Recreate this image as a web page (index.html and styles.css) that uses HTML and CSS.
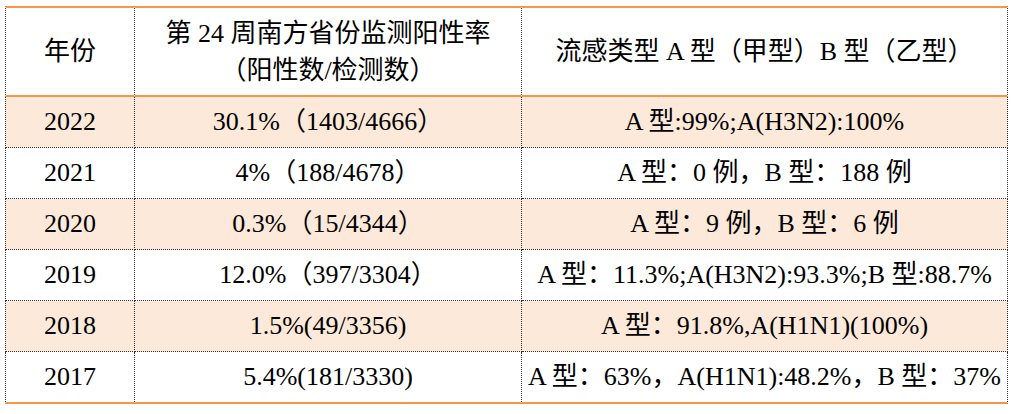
FILE: index.html
```html
<!DOCTYPE html>
<html lang="zh-CN">
<head>
<meta charset="utf-8">
<title>流感监测</title>
<link rel="stylesheet" href="styles.css">
</head>
<body>
<table class="flu">
  <colgroup>
    <col class="c-year">
    <col class="c-rate">
    <col class="c-type">
  </colgroup>
  <thead>
    <tr>
      <th class="first">年份</th>
      <th>第 24 周南方省份监测阳性率<br>（阳性数/检测数）</th>
      <th>流感类型 A 型（甲型）B 型（乙型）</th>
    </tr>
  </thead>
  <tbody>
    <tr class="shade">
      <td class="first">2022</td>
      <td>30.1%（1403/4666）</td>
      <td>A 型:99%;A(H3N2):100%</td>
    </tr>
    <tr>
      <td class="first">2021</td>
      <td>4%（188/4678）</td>
      <td>A 型：0 例，B 型：188 例</td>
    </tr>
    <tr class="shade">
      <td class="first">2020</td>
      <td>0.3%（15/4344）</td>
      <td>A 型：9 例，B 型：6 例</td>
    </tr>
    <tr>
      <td class="first">2019</td>
      <td>12.0%（397/3304）</td>
      <td>A 型：11.3%;A(H3N2):93.3%;B 型:88.7%</td>
    </tr>
    <tr class="shade">
      <td class="first">2018</td>
      <td>1.5%(49/3356)</td>
      <td>A 型：91.8%,A(H1N1)(100%)</td>
    </tr>
    <tr class="last">
      <td class="first">2017</td>
      <td>5.4%(181/3330)</td>
      <td>A 型：63%，A(H1N1):48.2%，B 型：37%</td>
    </tr>
  </tbody>
</table>
</body>
</html>
```

FILE: styles.css
```css
html, body {
  margin: 0;
  padding: 0;
  background: #ffffff;
}

body {
  padding: 6px 0 0 5px;
  font-family: "Liberation Serif", "Noto Sans CJK SC", serif;
  color: #000000;
}

.flu {
  border-collapse: separate;
  border-spacing: 0;
  width: 1003px;
  table-layout: fixed;
  font-size: 26px;
}

.c-year { width: 130px; }
.c-rate { width: 387px; }
.c-type { width: 486px; }

.flu th,
.flu td {
  padding: 0 2px;
  text-align: center;
  vertical-align: middle;
  font-weight: normal;
  white-space: nowrap;
  border-right: 1px dotted #333333;
}

.flu .first {
  border-left: 1px dotted #333333;
}

.flu th {
  height: 87px;
  line-height: 37px;
  border-top: 2px solid #f79646;
  border-bottom: 2px solid #f79646;
}

.flu td {
  height: 50px;
  line-height: 30px;
  border-bottom: 1px dotted #333333;
}

.flu tr.shade td {
  background: #fde9d9;
}

.flu tr.last td {
  border-bottom: 2px solid #f79646;
}
```
